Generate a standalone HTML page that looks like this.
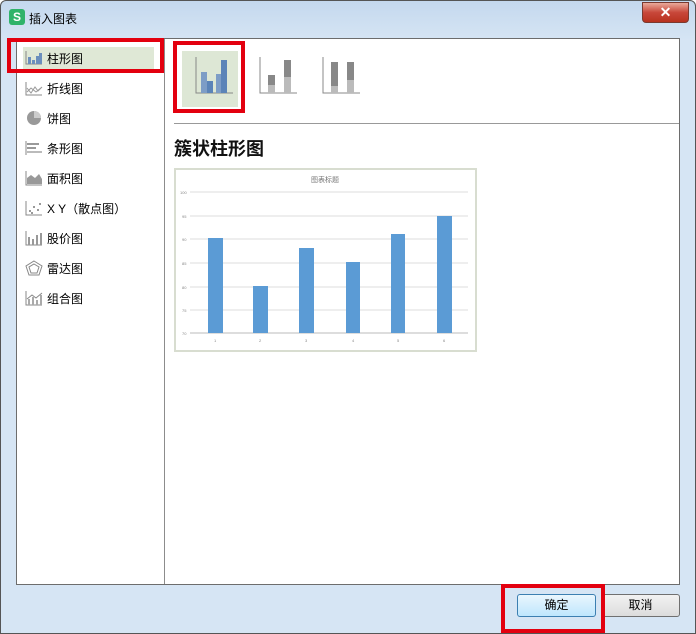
<!DOCTYPE html>
<html><head><meta charset="utf-8"><style>
body{margin:0;width:696px;height:634px;overflow:hidden;background:#fff;font-family:"Liberation Sans","Noto Sans CJK SC",sans-serif;font-size:12px;}
.win{position:absolute;left:0;top:0;width:694px;height:632px;border:1px solid #555;border-radius:6px 6px 0 0;background:linear-gradient(#c4d8ee,#d6e5f4 40px,#d6e5f4);}
.title{position:absolute;left:28px;top:9px;font-size:12px;color:#000;}
.logo{position:absolute;left:8px;top:8px;width:16px;height:16px;background:#2fb36a;border-radius:3px;color:#fff;font-weight:bold;font-size:12px;text-align:center;line-height:16px;}
.close{position:absolute;left:641px;top:1px;width:45px;height:19px;border:1px solid #7a3a30;border-radius:0 0 4px 4px;background:linear-gradient(#e9a99a,#c8473a 50%,#b8321f);color:#fff;text-align:center;font-weight:bold;font-size:14px;line-height:19px;}
.panel{position:absolute;left:16px;top:38px;width:662px;height:545px;border:1px solid #6d6d6d;background:#fff;}
.side{position:absolute;left:0;top:0;width:147px;height:545px;border-right:1px solid #8c8c8c;}
.item{position:absolute;left:30px;font-size:12px;color:#000;}
.ic{position:absolute;left:8px;width:18px;height:16px;}
.sel{position:absolute;left:6px;top:8px;width:131px;height:22px;background:#dfe8d6;}
.red{position:absolute;border:4px solid #e3000f;box-sizing:border-box;}
.btn{position:absolute;top:594px;height:21px;border:1px solid #707070;border-radius:3px;background:linear-gradient(#f2f2f2,#dcdcdc);text-align:center;line-height:21px;font-size:12px;}
</style></head><body>
<div class="win">
<div class="logo">S</div><div class="title">插入图表</div>
<div class="close">✕</div>
</div>
<div class="panel">
 <div class="side">
  <div class="sel"></div>
  <svg class="ic" style="top:10px" viewBox="0 0 18 16"><path d="M1 2V15H17" stroke="#888" fill="none"/><rect x="3" y="8" width="3" height="7" fill="#6b8fbd"/><rect x="7" y="11" width="3" height="4" fill="#6b8fbd"/><rect x="11" y="7" width="3" height="8" fill="#6b8fbd"/><rect x="14" y="4" width="3" height="11" fill="#6b8fbd"/></svg>
  <div class="item" style="top:11px">柱形图</div>
  <svg class="ic" style="top:41px" viewBox="0 0 18 16"><path d="M1 2V15H17" stroke="#888" fill="none"/><path d="M2 8l4 5 4-6 3 4 4-4M2 12l4-4 5 4 6-5" stroke="#999" fill="none"/></svg>
  <div class="item" style="top:41px">折线图</div>
  <svg class="ic" style="top:71px" viewBox="0 0 18 16"><circle cx="9" cy="8" r="7" fill="#999"/><path d="M9 8V1A7 7 0 0 1 16 8Z" fill="#ccc"/></svg>
  <div class="item" style="top:71px">饼图</div>
  <svg class="ic" style="top:101px" viewBox="0 0 18 16"><path d="M1 1V15" stroke="#888"/><rect x="2" y="3" width="12" height="2" fill="#999"/><rect x="2" y="7" width="9" height="2" fill="#999"/><rect x="2" y="11" width="15" height="2" fill="#bbb"/></svg>
  <div class="item" style="top:101px">条形图</div>
  <svg class="ic" style="top:131px" viewBox="0 0 18 16"><path d="M1 1V15H17" stroke="#888" fill="none"/><path d="M2 14V8l4-3 4 3 4-4 3 5v5Z" fill="#999"/></svg>
  <div class="item" style="top:131px">面积图</div>
  <svg class="ic" style="top:161px" viewBox="0 0 18 16"><path d="M1 1V15H17" stroke="#888" fill="none"/><g fill="#999"><rect x="4" y="10" width="2" height="2"/><rect x="8" y="6" width="2" height="2"/><rect x="12" y="9" width="2" height="2"/><rect x="14" y="3" width="2" height="2"/><rect x="6" y="12" width="2" height="2"/></g></svg>
  <div class="item" style="top:161px">X Y（散点图）</div>
  <svg class="ic" style="top:191px" viewBox="0 0 18 16"><path d="M1 1V15H17" stroke="#888" fill="none"/><g fill="#999"><rect x="3" y="7" width="2" height="8"/><rect x="7" y="9" width="2" height="6"/><rect x="11" y="5" width="2" height="10"/><rect x="15" y="3" width="2" height="12"/></g></svg>
  <div class="item" style="top:191px">股价图</div>
  <svg class="ic" style="top:221px" viewBox="0 0 18 16"><path d="M9 1L17 6 14 15H4L1 6Z M9 4L14 7 12 13H6L4 7Z" stroke="#888" fill="none"/></svg>
  <div class="item" style="top:221px">雷达图</div>
  <svg class="ic" style="top:251px" viewBox="0 0 18 16"><path d="M1 1V15H17" stroke="#888" fill="none"/><g fill="#aaa"><rect x="3" y="9" width="2" height="6"/><rect x="7" y="7" width="2" height="8"/><rect x="11" y="10" width="2" height="5"/><rect x="15" y="5" width="2" height="10"/></g><path d="M2 9l5-4 4 3 6-5" stroke="#888" fill="none"/></svg>
  <div class="item" style="top:251px">组合图</div>
 </div>
 <div style="position:absolute;left:165px;top:12px;width:56px;height:56px;background:#dde7d5"></div>
 <svg style="position:absolute;left:175px;top:16px" width="200" height="44" viewBox="0 0 200 44">
  <path d="M4 2V38H41" stroke="#888" fill="none"/>
  <rect x="9" y="17" width="6" height="21" fill="#7d9dc6"/><rect x="15" y="26" width="6" height="12" fill="#5b84b8"/><rect x="24" y="19" width="5" height="19" fill="#7d9dc6"/><rect x="29" y="5" width="6" height="33" fill="#5b84b8"/>
  <path d="M68 2V38H105" stroke="#888" fill="none"/>
  <rect x="76" y="20" width="7" height="10" fill="#888"/><rect x="76" y="30" width="7" height="8" fill="#bbb"/><rect x="92" y="5" width="7" height="17" fill="#888"/><rect x="92" y="22" width="7" height="16" fill="#bbb"/>
  <path d="M131 2V38H168" stroke="#888" fill="none"/>
  <rect x="139" y="7" width="7" height="24" fill="#888"/><rect x="139" y="31" width="7" height="7" fill="#bbb"/><rect x="155" y="7" width="7" height="18" fill="#888"/><rect x="155" y="25" width="7" height="13" fill="#bbb"/>
 </svg>
 <div style="position:absolute;left:157px;top:84px;width:505px;height:1px;background:#999"></div>
 <div style="position:absolute;left:157px;top:96px;font-size:18px;font-weight:bold;color:#111">簇状柱形图</div>
 <svg style="position:absolute;left:157px;top:129px" width="304" height="184" viewBox="174 168 304 184">
  <rect x="175" y="169" width="301" height="182" fill="#fff" stroke="#d8ddd0" stroke-width="2"/>
  <text x="325" y="182" font-size="7" fill="#777" text-anchor="middle" font-family="Noto Sans CJK SC,sans-serif">图表标题</text>
  <g stroke="#ddd"><path d="M190 192H468M190 216H468M190 239H468M190 263H468M190 287H468M190 310H468"/></g>
  <path d="M190 333H468" stroke="#bbb"/>
  <g font-size="4" fill="#888"><text x="180" y="194">100</text><text x="182" y="218">95</text><text x="182" y="241">90</text><text x="182" y="265">85</text><text x="182" y="289">80</text><text x="182" y="312">75</text><text x="182" y="335">70</text>
  <text x="214" y="342">1</text><text x="259" y="342">2</text><text x="305" y="342">3</text><text x="352" y="342">4</text><text x="397" y="342">5</text><text x="443" y="342">6</text></g>
  <g fill="#5b9bd5"><rect x="208" y="238" width="15" height="95"/><rect x="253" y="286" width="15" height="47"/><rect x="299" y="248" width="15" height="85"/><rect x="346" y="262" width="14" height="71"/><rect x="391" y="234" width="14" height="99"/><rect x="437" y="216" width="15" height="117"/></g>
 </svg>
</div>
<div class="btn" style="left:517px;width:77px;border-color:#3c7fb1;background:linear-gradient(#eaf6fd,#bee6fd)">确定</div>
<div class="btn" style="left:601px;width:77px">取消</div>
<div class="red" style="left:7px;top:38px;width:157px;height:35px"></div>
<div class="red" style="left:173px;top:41px;width:72px;height:72px"></div>
<div class="red" style="left:501px;top:584px;width:104px;height:49px"></div>
</body></html>
